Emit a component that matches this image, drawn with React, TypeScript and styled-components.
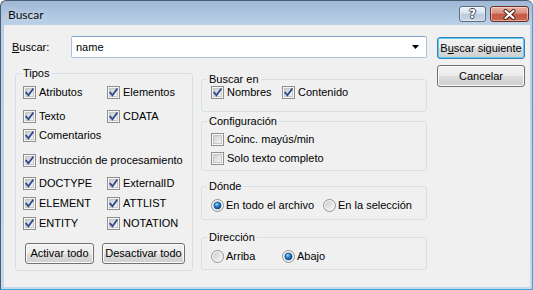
import React from 'react';
import styled, { createGlobalStyle } from 'styled-components';

const Global = createGlobalStyle`
  html, body { margin: 0; padding: 0; background: #ffffff; }
  body { font-family: "Liberation Sans", Arial, sans-serif; font-size: 11px; color: #000; }
  * { box-sizing: border-box; }
`;

const Window = styled.div`
  width: 533px;
  height: 290px;
  display: flex;
  flex-direction: column;
  border: 1px solid #4b5d72;
  border-right-color: #3aa6d6;
  border-bottom-color: #3aa6d6;
  border-radius: 6px 6px 0 0;
  background: linear-gradient(#a0b8d5, #b9cfe8 22px, #c4d8ee);
  padding: 0 2px 2px 3px;
  overflow: hidden;
`;

const TitleBar = styled.div`
  height: 24px;
  flex: none;
  display: flex;
  align-items: flex-start;
  padding: 5px 1px 0 4px;
`;

const TitleText = styled.span`
  font-family: Lato, "Liberation Sans", sans-serif;
  font-size: 12px;
  line-height: 16px;
  margin-top: 1px;
  color: #0b0b0b;
  text-shadow: 0 0 6px rgba(255, 255, 255, 0.8);
`;

const CaptionButtons = styled.div`
  margin-left: auto;
  display: flex;
  gap: 4px;
`;

const CaptionButton = styled.div<{ $w: number; $close?: boolean }>`
  width: ${(p) => p.$w}px;
  height: 16px;
  border-radius: 3px;
  border: 1px solid ${(p) => (p.$close ? '#6b2e25' : '#5c6b7d')};
  background: ${(p) =>
    p.$close
      ? 'linear-gradient(#ebb3a6 0%, #d98d7c 45%, #c75a44 50%, #c9654d 100%)'
      : 'linear-gradient(#eef3f9 0%, #d7e2ee 45%, #bccbdc 50%, #c7d5e4 100%)'};
  box-shadow: inset 0 0 0 1px rgba(255, 255, 255, 0.45);
  display: flex;
  align-items: center;
  justify-content: center;
`;

const HelpGlyph = styled.span`
  font-family: "DejaVu Sans", sans-serif;
  font-weight: bold;
  font-size: 12px;
  line-height: 14px;
  color: #ffffff;
  text-shadow: 1px 0 0 #3e4a5a, -1px 0 0 #3e4a5a, 0 1px 0 #3e4a5a, 0 -1px 0 #3e4a5a;
`;

const Client = styled.div`
  flex: 1;
  background: #f0f0f0;
  display: grid;
  grid-template-columns: 415px 88px;
  column-gap: 10px;
  align-items: start;
  padding: 11px 0 0 8px;
`;

const LeftCol = styled.div`
  display: flex;
  flex-direction: column;
`;

const SearchRow = styled.div`
  height: 22px;
  display: flex;
  align-items: center;
`;

const FieldLabel = styled.label`
  width: 59px;
  flex: none;
  line-height: 13px;
`;

const Combo = styled.div`
  flex: 1;
  height: 22px;
  background: #ffffff;
  border: 1px solid #a9c2dd;
  border-top-color: #7ea3cd;
  border-radius: 2px;
  display: flex;
  align-items: center;
  padding-left: 4px;
`;

const ComboText = styled.span`
  flex: 1;
  line-height: 13px;
`;

const ComboArrow = styled.div`
  width: 17px;
  height: 100%;
  display: flex;
  align-items: center;
  justify-content: center;
  margin-right: 2px;
`;

const Body = styled.div`
  display: flex;
  align-items: flex-start;
  margin: 8px 0 0 3px;
  gap: 8px;
`;

const RightCol = styled.div`
  width: 226px;
  display: flex;
  flex-direction: column;
  margin-top: 6px;
`;

const Group = styled.fieldset<{ $w?: number; $mt?: number }>`
  margin: ${(p) => p.$mt ?? 0}px 0 0 0;
  padding: 0;
  width: ${(p) => (p.$w ? `${p.$w}px` : 'auto')};
  min-inline-size: 0;
  border: 1px solid #d5dfe5;
  border-radius: 3px;
`;

const Legend = styled.legend`
  margin-left: 5px;
  padding: 0 2px;
  font-size: 11px;
  line-height: 14px;
  color: #000;
`;

const GroupBody = styled.div<{ $pt: number; $pb: number; $pl: number }>`
  display: flex;
  flex-direction: column;
  padding: ${(p) => `${p.$pt}px 0 ${p.$pb}px ${p.$pl}px`};
`;

const Row = styled.div<{ $mt?: number }>`
  display: flex;
  align-items: center;
  height: 13px;
  margin-top: ${(p) => p.$mt ?? 0}px;
`;

const Option = styled.div<{ $w?: number; $gap?: number }>`
  display: flex;
  align-items: center;
  gap: ${(p) => p.$gap ?? 3}px;
  width: ${(p) => (p.$w ? `${p.$w}px` : 'auto')};
  flex: none;
  line-height: 13px;
  white-space: nowrap;
  svg { flex: none; display: block; }
`;

const ButtonRow = styled.div<{ $mt: number }>`
  display: flex;
  gap: 8px;
  margin-top: ${(p) => p.$mt}px;
  padding-left: 2px;
`;

const ButtonCol = styled.div`
  display: flex;
  flex-direction: column;
  gap: 6px;
  padding-top: 1px;
`;

const PushButton = styled.button<{ $w: number; $h?: number; $default?: boolean }>`
  width: ${(p) => p.$w}px;
  height: ${(p) => p.$h ?? 22}px;
  padding: 0;
  margin: 0;
  font-family: "Liberation Sans", Arial, sans-serif;
  font-size: 11px;
  line-height: 13px;
  color: #000;
  border: 1px solid ${(p) => (p.$default ? '#3c7fb1' : '#707070')};
  border-radius: 3px;
  background: linear-gradient(#f2f2f2 0%, #ebebeb 50%, #dddddd 51%, #cfcfcf 100%);
  box-shadow: inset 0 0 0 1px ${(p) => (p.$default ? '#5ccdf5' : '#fcfcfc')};
  white-space: nowrap;
`;

const CheckBox: React.FC<{ checked?: boolean }> = ({ checked }) => (
  <svg width="13" height="13" viewBox="0 0 13 13">
    <defs>
      <linearGradient id="cbfill" x1="0" y1="0" x2="1" y2="1">
        <stop offset="0" stopColor="#cbcbcb" />
        <stop offset="1" stopColor="#f7f7f7" />
      </linearGradient>
    </defs>
    <rect x="0.5" y="0.5" width="12" height="12" fill="#f6f6f6" stroke="#8e8f8f" />
    <rect x="2.5" y="2.5" width="8" height="8" fill="url(#cbfill)" stroke="#c6c6c6" />
    {checked && (
      <path d="M3.2 6.6 L5.4 9.3 L9.9 3.2" fill="none" stroke="#2a4590" strokeWidth="1.7" strokeLinecap="square" strokeLinejoin="miter" />
    )}
  </svg>
);

const Radio: React.FC<{ checked?: boolean }> = ({ checked }) => (
  <svg width="13" height="13" viewBox="0 0 13 13">
    <defs>
      <linearGradient id="rbfill" x1="0" y1="0" x2="1" y2="1">
        <stop offset="0" stopColor="#c9c9c9" />
        <stop offset="1" stopColor="#f8f8f8" />
      </linearGradient>
      <radialGradient id="rbdot" cx="0.4" cy="0.35" r="0.65">
        <stop offset="0" stopColor="#a6dcfb" />
        <stop offset="0.45" stopColor="#2a86d0" />
        <stop offset="1" stopColor="#0d3e78" />
      </radialGradient>
    </defs>
    <circle cx="6.5" cy="6.5" r="6" fill="#f4f4f4" stroke="#8f9193" />
    <circle cx="6.5" cy="6.5" r="4.3" fill="url(#rbfill)" />
    {checked && <circle cx="6.5" cy="6.5" r="3.6" fill="url(#rbdot)" stroke="#1b4e86" strokeWidth="0.6" />}
  </svg>
);

const Check: React.FC<{ label: string; checked?: boolean; w?: number }> = ({ label, checked, w }) => (
  <Option $w={w}>
    <CheckBox checked={checked} />
    <span>{label}</span>
  </Option>
);

const RadioOpt: React.FC<{ label: string; checked?: boolean; w?: number }> = ({ label, checked, w }) => (
  <Option $w={w} $gap={2}>
    <Radio checked={checked} />
    <span>{label}</span>
  </Option>
);

export default function App() {
  return (
    <>
      <Global />
      <Window>
        <TitleBar>
          <TitleText>Buscar</TitleText>
          <CaptionButtons>
            <CaptionButton $w={27}>
              <HelpGlyph>?</HelpGlyph>
            </CaptionButton>
            <CaptionButton $w={39} $close>
              <svg width="13" height="11" viewBox="0 0 13 11">
                <path d="M2.5 2 L10.5 9 M10.5 2 L2.5 9" stroke="#3b1f1a" strokeWidth="4" strokeLinecap="round" />
                <path d="M2.5 2 L10.5 9 M10.5 2 L2.5 9" stroke="#ffffff" strokeWidth="2.2" strokeLinecap="round" />
              </svg>
            </CaptionButton>
          </CaptionButtons>
        </TitleBar>
        <Client>
          <LeftCol>
            <SearchRow>
              <FieldLabel>
                <u>B</u>uscar:
              </FieldLabel>
              <Combo>
                <ComboText>name</ComboText>
                <ComboArrow>
                  <svg width="7" height="4" viewBox="0 0 7 4">
                    <path d="M0 0 H7 L3.5 4 Z" fill="#000" />
                  </svg>
                </ComboArrow>
              </Combo>
            </SearchRow>
            <Body>
              <Group $w={178}>
                <Legend>Tipos</Legend>
                <GroupBody $pt={6} $pb={6} $pl={7}>
                  <Row>
                    <Check w={84} label="Atributos" checked />
                    <Check label="Elementos" checked />
                  </Row>
                  <Row $mt={11}>
                    <Check w={84} label="Texto" checked />
                    <Check label="CDATA" checked />
                  </Row>
                  <Row $mt={6}>
                    <Check label="Comentarios" checked />
                  </Row>
                  <Row $mt={12}>
                    <Check label="Instrucción de procesamiento" checked />
                  </Row>
                  <Row $mt={10}>
                    <Check w={84} label="DOCTYPE" checked />
                    <Check label="ExternalID" checked />
                  </Row>
                  <Row $mt={7}>
                    <Check w={84} label="ELEMENT" checked />
                    <Check label="ATTLIST" checked />
                  </Row>
                  <Row $mt={7}>
                    <Check w={84} label="ENTITY" checked />
                    <Check label="NOTATION" checked />
                  </Row>
                  <ButtonRow $mt={13}>
                    <PushButton $w={69} $h={21}>Activar todo</PushButton>
                    <PushButton $w={83} $h={21}>Desactivar todo</PushButton>
                  </ButtonRow>
                </GroupBody>
              </Group>
              <RightCol>
                <Group>
                  <Legend>Buscar en</Legend>
                  <GroupBody $pt={0} $pb={12} $pl={9}>
                    <Row>
                      <Check w={71} label="Nombres" checked />
                      <Check label="Contenido" checked />
                    </Row>
                  </GroupBody>
                </Group>
                <Group $mt={2}>
                  <Legend>Configuración</Legend>
                  <GroupBody $pt={5} $pb={5} $pl={9}>
                    <Row>
                      <Check label="Coinc. mayús/min" />
                    </Row>
                    <Row $mt={6}>
                      <Check label="Solo texto completo" />
                    </Row>
                  </GroupBody>
                </Group>
                <Group $mt={8}>
                  <Legend>Dónde</Legend>
                  <GroupBody $pt={6} $pb={7} $pl={9}>
                    <Row>
                      <RadioOpt w={112} label="En todo el archivo" checked />
                      <RadioOpt label="En la selección" />
                    </Row>
                  </GroupBody>
                </Group>
                <Group $mt={10}>
                  <Legend>Dirección</Legend>
                  <GroupBody $pt={6} $pb={6} $pl={9}>
                    <Row>
                      <RadioOpt w={71} label="Arriba" />
                      <RadioOpt label="Abajo" checked />
                    </Row>
                  </GroupBody>
                </Group>
              </RightCol>
            </Body>
          </LeftCol>
          <ButtonCol>
            <PushButton $w={88} $default>
              B<u>u</u>scar siguiente
            </PushButton>
            <PushButton $w={88}>Cancelar</PushButton>
          </ButtonCol>
        </Client>
      </Window>
    </>
  );
}
